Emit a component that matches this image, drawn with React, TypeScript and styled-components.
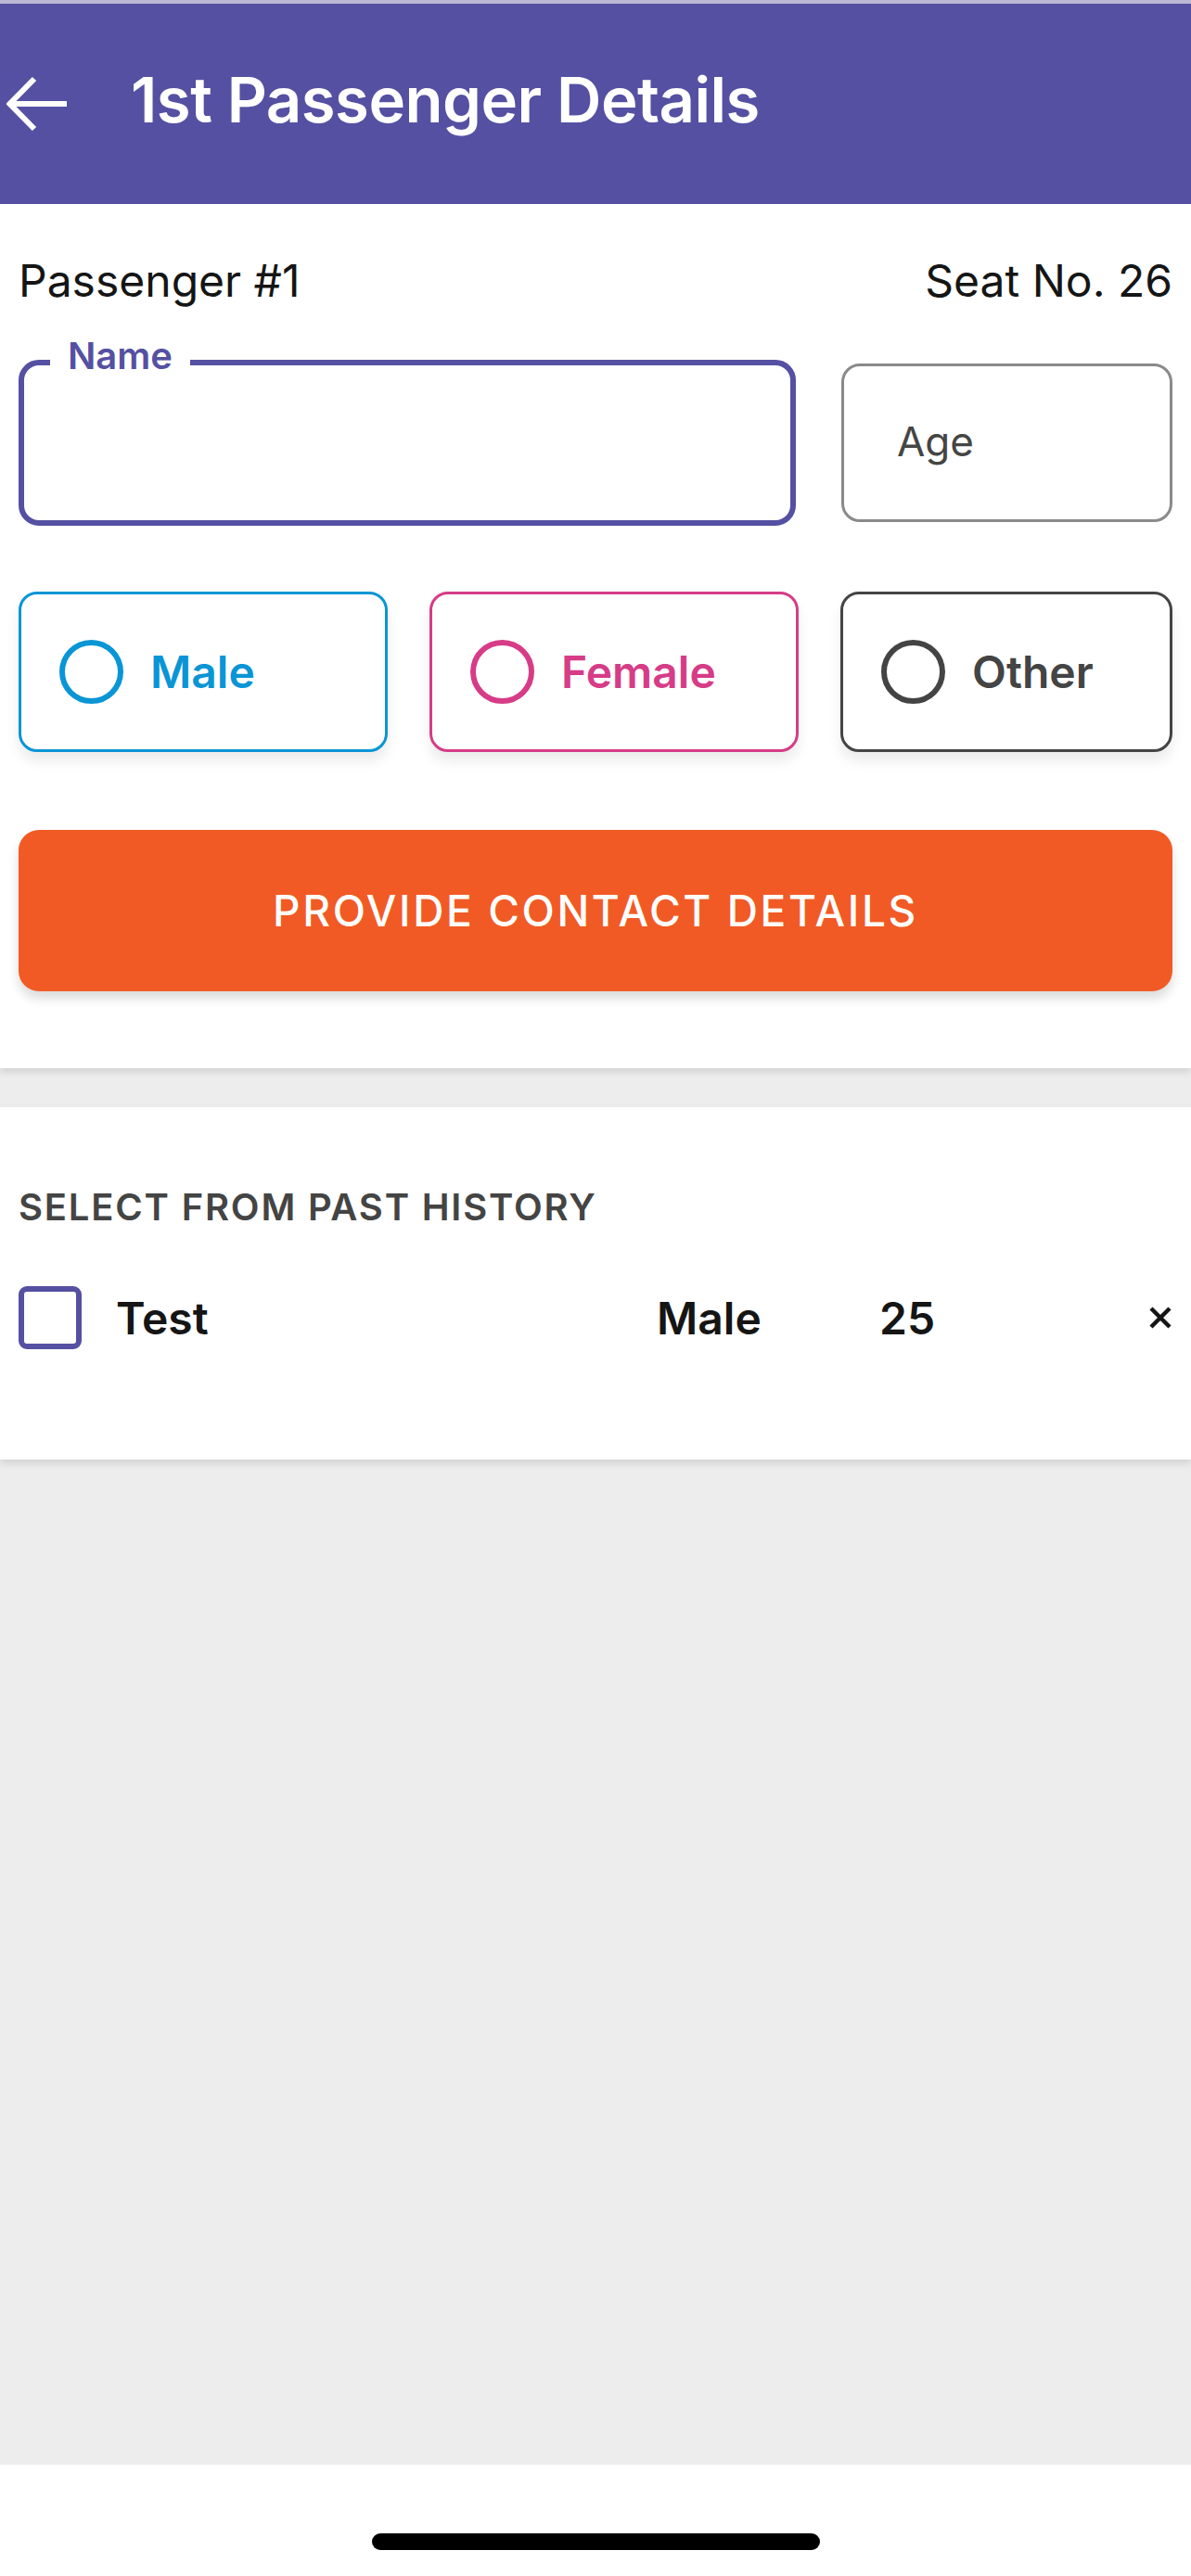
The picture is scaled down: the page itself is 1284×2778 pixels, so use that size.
import React from 'react'
import styled, { createGlobalStyle } from 'styled-components'

const PURPLE = '#5550a2'

const GlobalStyle = createGlobalStyle`
  html, body {
    margin: 0;
    padding: 0;
    background: #ededed;
    font-family: Inter, 'Noto Sans', 'Liberation Sans', sans-serif;
    -webkit-font-smoothing: antialiased;
  }
  * {
    box-sizing: border-box;
  }
`

const Screen = styled.div`
  display: flex;
  flex-direction: column;
  width: 1284px;
  min-height: 2778px;
  background: #ededed;
`

const StatusStrip = styled.div`
  height: 4px;
  background: #bbb8d3;
`

const Header = styled.header`
  display: flex;
  align-items: center;
  height: 216px;
  padding-left: 7px;
  background: ${PURPLE};
  color: #fff;
`

const BackButton = styled.button`
  display: flex;
  align-items: center;
  justify-content: center;
  width: 66px;
  height: 60px;
  padding: 0;
  border: 0;
  background: transparent;
  color: #fff;
`

const Title = styled.h1`
  margin: 0 0 10px 68px;
  font-size: 67px;
  font-weight: 600;
  letter-spacing: -0.5px;
`

const Card = styled.section<{ $top: number; $bottom: number }>`
  display: flex;
  flex-direction: column;
  padding: ${({ $top }) => $top}px 20px ${({ $bottom }) => $bottom}px;
  background: #fff;
  box-shadow: 0 4px 8px rgba(0, 0, 0, 0.12);
  position: relative;
`

const Spacer = styled.div<{ $h: number }>`
  height: ${({ $h }) => $h}px;
  flex-shrink: 0;
`

const InfoRow = styled.div`
  display: flex;
  justify-content: space-between;
  font-size: 48px;
  line-height: 58px;
  color: #151515;
`

const FieldsRow = styled.div`
  display: grid;
  grid-template-columns: 838px 1fr;
  column-gap: 49px;
  align-items: center;
  margin-top: 56px;
`

const NameBox = styled.div`
  position: relative;
  height: 179px;
  border: 6px solid ${PURPLE};
  border-radius: 22px;
`

const FloatingLabel = styled.label`
  position: absolute;
  top: -34px;
  left: 28px;
  padding: 0 19px;
  background: #fff;
  color: ${PURPLE};
  font-size: 40px;
  font-weight: 600;
  line-height: 48px;
`

const AgeBox = styled.div`
  display: flex;
  align-items: center;
  height: 171px;
  padding-left: 57px;
  padding-bottom: 4px;
  border: 3px solid #8a8a8a;
  border-radius: 20px;
  color: #454545;
  font-size: 44px;
`

const GenderRow = styled.div`
  display: grid;
  grid-template-columns: 398px 398px 1fr;
  column-gap: 45px;
  margin-top: 71px;
`

const GenderOption = styled.div<{ $color: string }>`
  display: flex;
  align-items: center;
  gap: 29px;
  height: 173px;
  padding-left: 41px;
  border: 3px solid ${({ $color }) => $color};
  border-radius: 20px;
  background: #fff;
  color: ${({ $color }) => $color};
  font-size: 48px;
  font-weight: 600;
  box-shadow: 0 10px 14px rgba(0, 0, 0, 0.08);
`

const Radio = styled.span<{ $color: string }>`
  width: 69px;
  height: 69px;
  border: 6px solid ${({ $color }) => $color};
  border-radius: 50%;
  flex-shrink: 0;
`

const PrimaryButton = styled.button`
  height: 174px;
  margin-top: 84px;
  border: 0;
  border-radius: 22px;
  background: #f15a24;
  color: #fff;
  font-family: inherit;
  font-size: 46px;
  font-weight: 500;
  letter-spacing: 2.6px;
  box-shadow: 0 8px 12px rgba(0, 0, 0, 0.14);
`

const SectionTitle = styled.h2`
  margin: 0;
  font-size: 40px;
  line-height: 48px;
  font-weight: 600;
  letter-spacing: 1.8px;
  color: #444;
`

const HistoryRow = styled.div`
  display: grid;
  grid-template-columns: 68px 546px 203px 1fr auto;
  column-gap: 37px;
  align-items: center;
  margin-top: 61px;
  font-size: 48px;
  font-weight: 600;
  color: #151515;
`

const Checkbox = styled.span`
  width: 68px;
  height: 68px;
  border: 6px solid ${PURPLE};
  border-radius: 9px;
`

const RemoveButton = styled.button`
  display: flex;
  padding: 0;
  border: 0;
  background: transparent;
  color: #151515;
`

const Filler = styled.div`
  flex: 1;
`

const HomeArea = styled.div`
  display: flex;
  justify-content: center;
  height: 120px;
  padding-top: 74px;
  background: #fff;
`

const HomeIndicator = styled.div`
  width: 483px;
  height: 18px;
  border-radius: 9px;
  background: #000;
`

const genders = [
  { label: 'Male', color: '#0a95d5' },
  { label: 'Female', color: '#d63c87' },
  { label: 'Other', color: '#444444' },
]

export default function App() {
  return (
    <Screen>
      <GlobalStyle />
      <StatusStrip />
      <Header>
        <BackButton aria-label="Back">
          <svg width="66" height="60" viewBox="0 0 66 60" fill="none">
            <path
              d="M65 30H4M30 3L3.5 30L30 57"
              stroke="currentColor"
              strokeWidth="6"
            />
          </svg>
        </BackButton>
        <Title>1st Passenger Details</Title>
      </Header>

      <Card $top={54} $bottom={83}>
        <InfoRow>
          <span>Passenger #1</span>
          <span>Seat No. 26</span>
        </InfoRow>
        <FieldsRow>
          <NameBox>
            <FloatingLabel>Name</FloatingLabel>
          </NameBox>
          <AgeBox>Age</AgeBox>
        </FieldsRow>
        <GenderRow>
          {genders.map((g) => (
            <GenderOption key={g.label} $color={g.color}>
              <Radio $color={g.color} />
              {g.label}
            </GenderOption>
          ))}
        </GenderRow>
        <PrimaryButton>PROVIDE CONTACT DETAILS</PrimaryButton>
      </Card>

      <Spacer $h={42} />

      <Card $top={84} $bottom={119}>
        <SectionTitle>SELECT FROM PAST HISTORY</SectionTitle>
        <HistoryRow>
          <Checkbox />
          <span>Test</span>
          <span>Male</span>
          <span>25</span>
          <RemoveButton aria-label="Remove">
            <svg width="26" height="24" viewBox="0 0 26 24">
              <path d="M3 2L23 22M23 2L3 22" stroke="currentColor" strokeWidth="4.5" />
            </svg>
          </RemoveButton>
        </HistoryRow>
      </Card>

      <Filler />
      <HomeArea>
        <HomeIndicator />
      </HomeArea>
    </Screen>
  )
}
